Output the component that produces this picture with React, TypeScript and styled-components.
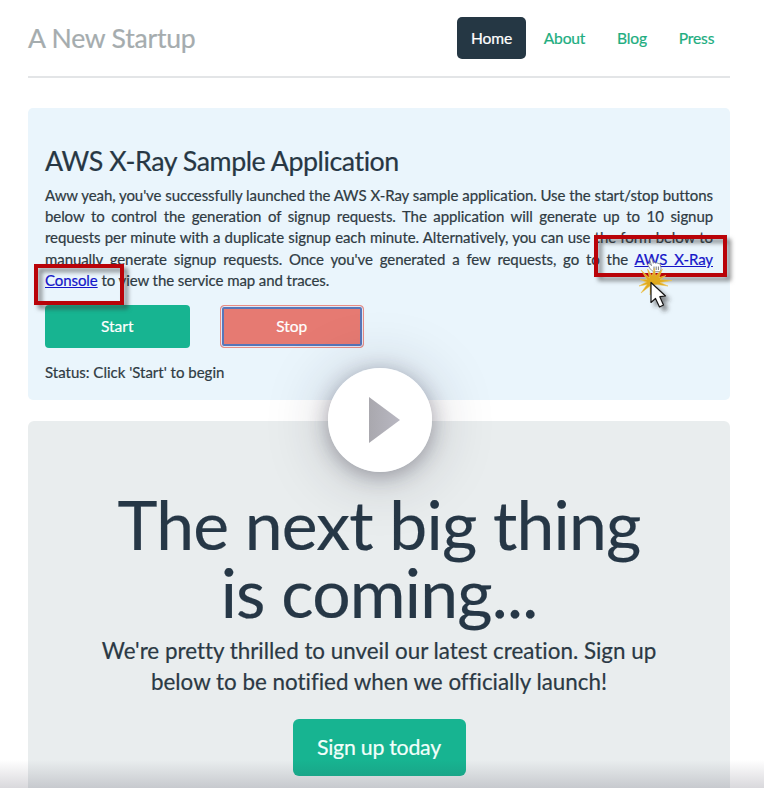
import React from "react";
import styled, { createGlobalStyle } from "styled-components";

const GlobalStyle = createGlobalStyle`
  * { box-sizing: border-box; }
  html, body { margin: 0; padding: 0; background: #fff; }
  body {
    font-family: Lato, "Open Sans", sans-serif;
    font-variant-ligatures: none;
    -webkit-text-stroke: 0.2px currentColor;
    color: #2c3e50;
    overflow: hidden;
  }
  h1, h2, p { margin: 0; font-weight: 400; }
  button { font-variant-ligatures: none; }
`;

const Page = styled.div`
  position: relative;
  width: 764px;
  height: 788px;
  padding: 17px 34px 0 28px;
  overflow: hidden;
`;

const Header = styled.header`
  display: flex;
  justify-content: space-between;
  height: 61px;
  border-bottom: 2px solid #e3e5e7;
`;

const Brand = styled.h2`
  font-size: 26.6px;
  letter-spacing: -0.22px;
  line-height: 42px;
  color: #a5acae;
  white-space: nowrap;
`;

const Nav = styled.nav`
  display: flex;
  gap: 2px;
`;

const NavLink = styled.a<{ $active?: boolean; $width: number }>`
  display: flex;
  align-items: center;
  justify-content: center;
  width: ${(p) => p.$width}px;
  height: 42px;
  padding-bottom: 1px;
  border-radius: 5px;
  font-size: 15.6px;
  letter-spacing: -0.15px;
  color: ${(p) => (p.$active ? "#fff" : "#21ad80")};
  background: ${(p) => (p.$active ? "#253744" : "transparent")};
`;

const InfoPanel = styled.section`
  position: relative;
  height: 292px;
  margin-top: 30px;
  padding: 38px 17px 0;
  border-radius: 5px;
  background: #eaf5fc;
`;

const InfoTitle = styled.h2`
  font-size: 26.8px;
  letter-spacing: -0.45px;
  line-height: 30px;
  color: #273744;
  white-space: nowrap;
`;

const Copy = styled.p`
  margin-top: 9px;
  font-size: 15px;
  letter-spacing: -0.08px;
  line-height: 21.2px;
  color: #2f3b43;
`;

const Line = styled.span<{ $last?: boolean }>`
  display: block;
  white-space: nowrap;
  text-align-last: ${(p) => (p.$last ? "left" : "justify")};
`;

const TextLink = styled.a`
  color: #1515c8;
  text-decoration: underline;
`;

const Actions = styled.div`
  display: flex;
  gap: 30px;
  margin-top: 14px;
`;

const ActionButton = styled.button<{ $focused?: boolean }>`
  width: 144.5px;
  height: 43px;
  padding: 0 0 1px;
  border: ${(p) => (p.$focused ? "1px solid #e98c83" : "0")};
  border-radius: 4px;
  font: 400 15.5px Lato, sans-serif;
  color: #fff;
  background: ${(p) => (p.$focused ? "#e67a72" : "#17b491")};
  box-shadow: ${(p) =>
    p.$focused ? "inset 0 0 0 1px #e3e6f3, inset 0 0 0 3px #5876b8" : "none"};
`;

const Status = styled.p`
  margin-top: 14px;
  font-size: 15px;
  line-height: 21px;
  color: #2f3b43;
`;

const Highlight = styled.div<{ $x: number; $y: number; $w: number; $h: number }>`
  position: absolute;
  left: ${(p) => p.$x}px;
  top: ${(p) => p.$y}px;
  width: ${(p) => p.$w}px;
  height: ${(p) => p.$h}px;
  border: 4px solid #b90309;
  filter: drop-shadow(4px 4px 2px rgba(50, 50, 50, 0.55));
`;

const Pointer = styled.svg`
  position: absolute;
  left: 602px;
  top: 142px;
  overflow: visible;
`;

const Hero = styled.section`
  display: flex;
  flex-direction: column;
  align-items: center;
  height: 400px;
  margin-top: 21px;
  padding-top: 69px;
  border-radius: 6px;
  background: #e9edee;
  text-align: center;
`;

const HeroTitle = styled.h1`
  font-size: 67.8px;
  letter-spacing: -0.8px;
  line-height: 67.5px;
  color: #263746;
  white-space: nowrap;
`;

const Lead = styled.p`
  margin-top: 10px;
  font-size: 22.4px;
  line-height: 31.3px;
  color: #2b3944;
  white-space: nowrap;
`;

const SignUp = styled.button`
  width: 173px;
  height: 57px;
  margin-top: 21px;
  padding: 0;
  border: 0;
  border-radius: 6px;
  font: 400 21.3px Lato, sans-serif;
  letter-spacing: -0.25px;
  color: #f2fffb;
  background: #17b491;
`;

const PlayButton = styled.div`
  position: absolute;
  left: 328px;
  top: 368px;
  width: 104px;
  height: 104px;
  border-radius: 50%;
  background: rgba(255, 255, 255, 0.97);
  box-shadow: 0 4px 20px rgba(35, 30, 50, 0.32), 0 4px 62px rgba(35, 30, 50, 0.25);

  svg { display: block; }
`;

const BottomShade = styled.div`
  position: absolute;
  left: 0;
  right: 0;
  bottom: 0;
  height: 28px;
  background: linear-gradient(rgba(45, 40, 62, 0), rgba(45, 40, 62, 0.18));
`;

function ClickPointer() {
  return (
    <Pointer width="56" height="64" viewBox="0 0 56 64">
      <defs>
        <filter id="arrowShadow" x="-50%" y="-50%" width="220%" height="220%">
          <feDropShadow dx="4" dy="4" stdDeviation="2" floodColor="#333" floodOpacity="0.55" />
        </filter>
      </defs>
      <path
        d="M20 18.5l-2-3.2c-.8-1.6.8-2.5 2-1.2l1.5 1.6-1.6-5.6c-.4-1.7 1.6-2.2 2.2-.6l1.2 3.8c.5-1.3 1.8-1.2 2.4 0 .8-1 2.1-.7 2.4.4.8-.6 1.8-.1 2.1.8l.7 3.1c.2 1.4-.2 2.8-1 4.1h-6.4c-1.3-.6-2.4-1.8-3.5-3.2z"
        fill="#fff"
        stroke="#74777d"
        strokeWidth=".8"
      />
      <path d="M24 16.5v3.5m2.2-3.5v3.5m2.2-3.5v3.5" stroke="#555" strokeWidth=".8" />
      <path
        d="M19.5 28L17.5 19L22 26L24.5 18L25.5 26L32.5 19L29 27.5L36 25.5L30 29.5L42 30.5L30 32.5L38 36L27 34.5L23 35L20 45L20 36L11 43L17 34.5L9 36L16.5 32L10 29.5L17 29.5L11 20Z"
        fill="#e0aa1d"
        stroke="#edc452"
        strokeWidth=".6"
      />
      <path
        d="M21 32.5V52.5L25.5 48.5L29.5 57L33.5 55L29.8 46.7L35.5 46Z"
        fill="#fff"
        stroke="#151515"
        strokeWidth="1.2"
        strokeLinejoin="round"
        filter="url(#arrowShadow)"
      />
    </Pointer>
  );
}

export default function App() {
  return (
    <>
      <GlobalStyle />
      <Page>
        <Header>
          <Brand>A New Startup</Brand>
          <Nav>
            <NavLink $active $width={69}>Home</NavLink>
            <NavLink $width={73}>About</NavLink>
            <NavLink $width={58}>Blog</NavLink>
            <NavLink $width={67}>Press</NavLink>
          </Nav>
        </Header>

        <InfoPanel>
          <InfoTitle>AWS X-Ray Sample Application</InfoTitle>
          <Copy>
            <Line>Aww yeah, you've successfully launched the AWS X-Ray sample application. Use the start/stop buttons</Line>
            <Line>below to control the generation of signup requests. The application will generate up to 10 signup</Line>
            <Line>requests per minute with a duplicate signup each minute. Alternatively, you can use the form below to</Line>
            <Line>
              manually generate signup requests. Once you've generated a few requests, go to the <TextLink>AWS X-Ray</TextLink>
            </Line>
            <Line $last>
              <TextLink>Console</TextLink> to view the service map and traces.
            </Line>
          </Copy>
          <Actions>
            <ActionButton>Start</ActionButton>
            <ActionButton $focused>Stop</ActionButton>
          </Actions>
          <Status>Status: Click 'Start' to begin</Status>
          <Highlight $x={6} $y={156} $w={90} $h={41} />
          <Highlight $x={566} $y={127} $w={133} $h={42} />
          <ClickPointer />
        </InfoPanel>

        <Hero>
          <HeroTitle>
            The next big thing
            <br />
            is coming...
          </HeroTitle>
          <Lead>
            We're pretty thrilled to unveil our latest creation. Sign up
            <br />
            below to be notified when we officially launch!
          </Lead>
          <SignUp>Sign up today</SignUp>
        </Hero>

        <PlayButton>
          <svg width="104" height="104" viewBox="0 0 104 104">
            <defs>
              <linearGradient id="play" x1="0" y1="0" x2="1" y2="0">
                <stop offset="0" stopColor="#a9a8ae" />
                <stop offset="1" stopColor="#b9b8c2" />
              </linearGradient>
            </defs>
            <path d="M41 29L72 52L41 75Z" fill="url(#play)" />
          </svg>
        </PlayButton>
        <BottomShade />
      </Page>
    </>
  );
}
